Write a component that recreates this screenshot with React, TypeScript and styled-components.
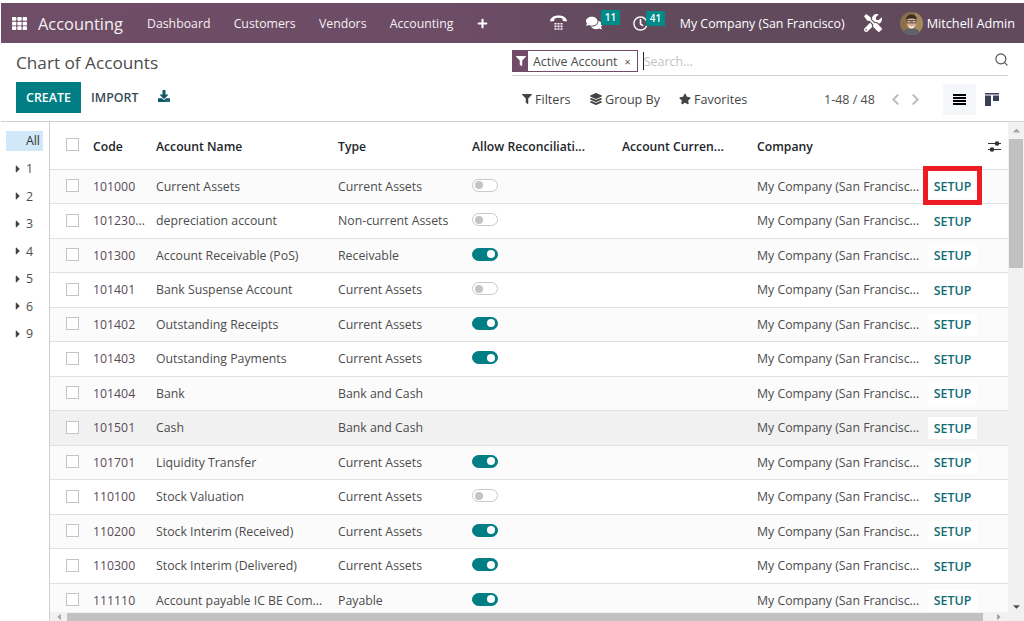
import styled, { createGlobalStyle } from "styled-components";
import { Search } from "lucide-react";
import {
  FaCaretDown,
  FaCaretLeft,
  FaCaretRight,
  FaCaretUp,
  FaChevronLeft,
  FaChevronRight,
  FaComments,
  FaDownload,
  FaFilter,
  FaLayerGroup,
  FaPlus,
  FaRegClock,
  FaStar,
  FaTh,
  FaTools,
} from "react-icons/fa";

const GlobalStyle = createGlobalStyle`
  html, body {
    margin: 0;
    height: 100%;
    background: #fff;
    overflow: hidden;
  }
  body {
    font-family: "Open Sans", "Noto Sans", "Liberation Sans", sans-serif;
    font-size: 12px;
    color: #4c4c4c;
  }
  * {
    box-sizing: border-box;
  }
`;

const Page = styled.div`
  display: flex;
  flex-direction: column;
  height: 621px;
  padding-top: 3px;
`;

const NavBar = styled.header`
  display: flex;
  align-items: center;
  flex: none;
  height: 40px;
  margin-left: 1px;
  padding: 0 9px 0 11px;
  background: linear-gradient(90deg, #6f4d66, #6d4c65 45%, #624a5d 60%);
  color: #fff;
`;

const AppsIcon = styled(FaTh)`
  width: 15px;
  height: 15px;
`;

const BrandName = styled.span`
  margin: 0 24px 0 11px;
  font-size: 16.4px;
  opacity: 0.92;
`;

const NavLink = styled.span`
  margin-right: 23.200px;
  font-size: 12.3px;
  opacity: 0.92;
`;

const NavPlus = styled(FaPlus)`
  width: 11px;
  height: 11px;
`;

const NavRight = styled.div`
  display: flex;
  align-items: center;
  margin-left: auto;
`;

const IconWithBadge = styled.span<{ $gap: number }>`
  position: relative;
  display: flex;
  align-items: center;
  margin-right: ${(p) => p.$gap}px;
`;

const Badge = styled.span<{ $left: number }>`
  position: absolute;
  top: -5px;
  left: ${(p) => p.$left}px;
  padding: 0 4px;
  height: 15px;
  line-height: 15px;
  font-size: 10px;
  font-weight: 600;
  background: #018a8a;
  color: #fff;
`;

const CompanyName = styled.span`
  margin-right: 19px;
  font-size: 12.4px;
`;

const UserName = styled.span`
  margin-left: 4px;
  font-size: 12.7px;
`;

const ControlPanel = styled.section`
  display: grid;
  grid-template-columns: 511px 1fr;
  grid-template-rows: 39px 39px;
  flex: none;
  height: 79px;
  margin-left: 1px;
  border-bottom: 1px solid #cfcfcf;
`;

const PageTitle = styled.h1`
  margin: 0;
  padding: 7px 0 0 15px;
  font-size: 17.2px;
  line-height: 26px;
  font-weight: 400;
  color: #4c4c4c;
`;

const SearchRow = styled.div`
  display: flex;
  align-items: center;
  height: 33px;
  margin: 0 16px 0 0;
  padding-top: 4px;
  border-bottom: 1px solid #cfcfcf;
`;

const Facet = styled.div`
  display: flex;
  align-items: center;
  height: 22px;
  border: 1px solid #714b67;
  font-size: 12.4px;
  color: #4c4c4c;
`;

const FacetIcon = styled.span`
  display: flex;
  align-items: center;
  justify-content: center;
  width: 15px;
  height: 100%;
  background: #714b67;
  color: #fff;
`;

const FacetLabel = styled.span`
  padding: 0 5px;
`;

const FacetClose = styled.span`
  padding: 0 6px 0 2px;
  font-size: 11px;
  color: #555;
`;

const SearchCaret = styled.span`
  width: 1px;
  height: 18px;
  margin-left: 5px;
  background: #222;
`;

const SearchHint = styled.span`
  flex: 1;
  font-size: 12.4px;
  color: #c3c3c3;
`;

const SearchIcon = styled(Search)`
  color: #4c4c4c;
  margin: -4px -1px 0 0;
`;

const LeftButtons = styled.div`
  display: flex;
  align-items: center;
  align-self: start;
  height: 31px;
  padding-left: 15px;
`;

const CreateButton = styled.button`
  height: 31px;
  width: 65px;
  padding: 0;
  border: none;
  background: #017e84;
  color: #fff;
  font: 600 12.4px "Open Sans", sans-serif;
`;

const ImportButton = styled.button`
  margin-left: 10px;
  padding: 0;
  border: none;
  background: none;
  color: #3a4a57;
  font: 600 12.4px "Open Sans", sans-serif;
`;

const DownloadIcon = styled(FaDownload)`
  width: 12px;
  height: 12px;
  margin: -3px 0 0 20px;
  color: #0d5a66;
`;

const RightTools = styled.div`
  display: flex;
  align-items: center;
  align-self: start;
  height: 34px;
  padding-left: 10px;
`;

const FilterItem = styled.span<{ $width: number }>`
  display: flex;
  align-items: center;
  gap: 3px;
  width: ${(p) => p.$width}px;
  font-size: 12.6px;
  font-weight: 500;
  color: #444;
`;

const Pager = styled.span`
  margin-left: 9px;
  font-size: 12.5px;
  color: #4c4c4c;
`;

const PagerArrows = styled.span`
  display: flex;
  gap: 7px;
  margin-left: 14px;
  color: #b9bec4;
`;

const ViewButton = styled.span`
  display: flex;
  align-items: center;
  justify-content: center;
  width: 33px;
  height: 31px;
  margin-left: 21px;
  background: #f4f6fa;
  color: #000;
`;

const KanbanIcon = styled.svg`
  margin-left: 9px;
`;

const Body = styled.div`
  display: flex;
  flex: 1;
  min-height: 0;
`;

const SidePanel = styled.aside`
  flex: none;
  width: 49px;
  margin-left: 1px;
  padding: 9px 6px 0 5px;
  border-right: 1px solid #cfcfcf;
  font-size: 12.4px;
  color: #4c4c4c;
`;

const SideAll = styled.div`
  height: 20px;
  padding-right: 3px;
  line-height: 20px;
  text-align: right;
  background: #d0e8f8;
  color: #333;
`;

const SideList = styled.div`
  padding-top: 4px;
`;

const SideItem = styled.div`
  display: flex;
  align-items: center;
  gap: 4px;
  height: 27.500px;
  padding-left: 8px;
`;

const Caret = styled(FaCaretRight)`
  width: 8px;
  height: 12px;
  color: #444;
`;

const ListArea = styled.div`
  display: grid;
  grid-template-columns: 1fr 16px;
  grid-template-rows: 1fr 9px;
  flex: 1;
  min-width: 0;
`;

const TableClip = styled.div`
  overflow: hidden;
  min-height: 0;
`;

const columns = "43px 63px 182px 134px 150px 135px 171px 49px 30px";

const HeaderRow = styled.div`
  display: grid;
  grid-template-columns: ${columns};
  align-items: center;
  height: 47.500px;
  padding-top: 3px;
  border-bottom: 1px solid #dee2e6;
  font-size: 12.2px;
  font-weight: 600;
  color: #212529;
`;

const DataRow = styled.div<{ $striped: boolean; $hover: boolean }>`
  display: grid;
  grid-template-columns: ${columns};
  align-items: center;
  height: 34.500px;
  border-bottom: 1px solid #dee2e6;
  font-size: 12.3px;
  background: ${(p) => (p.$hover ? "#f1f1f1" : p.$striped ? "#fbfbfb" : "#fff")};
`;

const Cell = styled.span`
  white-space: nowrap;
`;

const CodeCell = styled(Cell)`
  color: #5a4a58;
`;

const Checkbox = styled.span`
  display: block;
  width: 13px;
  height: 13px;
  margin: -1px 0 0 16px;
  border: 1px solid #c4c4c4;
  background: #fff;
`;

const HeaderCheckbox = styled(Checkbox)`
  margin-top: -4px;
`;

const Toggle = styled.span<{ $on: boolean }>`
  display: flex;
  align-items: center;
  justify-content: ${(p) => (p.$on ? "flex-end" : "flex-start")};
  width: 26px;
  height: 13px;
  margin-top: -2px;
  padding: 0 2px;
  border-radius: 7px;
  border: 1px solid ${(p) => (p.$on ? "#017e84" : "#c8c8c8")};
  background: ${(p) => (p.$on ? "#017e84" : "#fff")};
  &::after {
    content: "";
    width: 8px;
    height: 8px;
    border-radius: 50%;
    background: ${(p) => (p.$on ? "#fff" : "#c4c4c4")};
  }
`;

const SetupWrap = styled.span`
  position: relative;
  display: flex;
  margin-top: 1px;
`;

const SetupButton = styled.button<{ $plain: boolean }>`
  width: 49px;
  height: 22px;
  padding: 0;
  border: none;
  background: ${(p) => (p.$plain ? "transparent" : "#fff")};
  color: #0f6b73;
  font: 600 12.4px "Open Sans", sans-serif;
`;

const Highlight = styled.span`
  position: absolute;
  top: -10px;
  left: -5px;
  width: 59px;
  height: 39px;
  border: 5px solid #ed1c24;
`;

const ColumnTool = styled.svg`
  justify-self: end;
  margin-right: 6px;
`;

const VerticalBar = styled.div`
  display: flex;
  flex-direction: column;
  align-items: center;
  background: #f1f1f1;
  color: #a3a3a3;
  font-size: 11px;
`;

const BarEnd = styled.span<{ $grow?: boolean }>`
  display: flex;
  flex: ${(p) => (p.$grow ? 1 : "none")};
  align-items: ${(p) => (p.$grow ? "flex-end" : "center")};
  height: 17px;
  color: ${(p) => (p.$grow ? "#505050" : "#a3a3a3")};
`;

const VerticalThumb = styled.div`
  flex: none;
  width: 14px;
  height: 129px;
  background: #c1c1c1;
`;

const HorizontalBar = styled.div`
  display: flex;
  align-items: center;
  padding: 0 4px;
  background: #f1f1f1;
  font-size: 10px;
  color: #a3a3a3;
`;

const HorizontalThumb = styled.div`
  align-self: flex-end;
  width: 916px;
  height: 8px;
  margin: 0 auto 0 3px;
  background: #c1c1c1;
`;

const BarCorner = styled.div`
  background: #f1f1f1;
`;

type Account = {
  code: string;
  name: string;
  type: string;
  reconcile?: boolean;
};

const accounts: Account[] = [
  { code: "101000", name: "Current Assets", type: "Current Assets", reconcile: false },
  { code: "101230...", name: "depreciation account", type: "Non-current Assets", reconcile: false },
  { code: "101300", name: "Account Receivable (PoS)", type: "Receivable", reconcile: true },
  { code: "101401", name: "Bank Suspense Account", type: "Current Assets", reconcile: false },
  { code: "101402", name: "Outstanding Receipts", type: "Current Assets", reconcile: true },
  { code: "101403", name: "Outstanding Payments", type: "Current Assets", reconcile: true },
  { code: "101404", name: "Bank", type: "Bank and Cash" },
  { code: "101501", name: "Cash", type: "Bank and Cash" },
  { code: "101701", name: "Liquidity Transfer", type: "Current Assets", reconcile: true },
  { code: "110100", name: "Stock Valuation", type: "Current Assets", reconcile: false },
  { code: "110200", name: "Stock Interim (Received)", type: "Current Assets", reconcile: true },
  { code: "110300", name: "Stock Interim (Delivered)", type: "Current Assets", reconcile: true },
  { code: "111110", name: "Account payable IC BE Com...", type: "Payable", reconcile: true },
];

const groups = ["1", "2", "3", "4", "5", "6", "9"];

function PhoneIcon() {
  return (
    <svg width="17" height="16" viewBox="0 0 17 16" fill="#fff">
      <path d="M0 5.2C1.5 1.8 4.8.5 8.500.5s7 1.300 8.500 4.700l-.5 1.300-3.600-.6-.5-2.300c-1.200-.6-2.600-.8-3.900-.8s-2.700.2-3.900.8l-.5 2.300-3.600.6z" />
      <path d="M4.500 8h2v1.600h-2zM7.500 8h2v1.600h-2zM10.500 8h2v1.600h-2zM4.500 10.600h2v1.600h-2zM7.500 10.600h2v1.600h-2zM10.500 10.600h2v1.600h-2zM4.500 13.200h2v1.600h-2zM7.500 13.200h2v1.600h-2zM10.500 13.200h2v1.600h-2z" />
    </svg>
  );
}

function Avatar() {
  return (
    <svg width="23" height="23" viewBox="0 0 23 23">
      <defs>
        <clipPath id="avatar-clip">
          <circle cx="11.5" cy="11.5" r="11.500" />
        </clipPath>
      </defs>
      <g clipPath="url(#avatar-clip)">
        <rect width="23" height="23" fill="#8a7048" />
        <rect x="15" width="8" height="23" fill="#a38a5c" />
        <path d="M3 23c0-5 4-7 8.500-7s8.500 2 8.500 7z" fill="#5d6468" />
        <ellipse cx="11.500" cy="10.500" rx="5" ry="6.500" fill="#d9ab8e" />
        <path d="M6 8c0-4 3-5.500 5.500-5.500S17 4 17 8c-2-2-9-2-11 0z" fill="#3b2d25" />
        <rect x="7" y="8.500" width="4" height="2.500" fill="none" stroke="#3a3a3a" strokeWidth=".7" />
        <rect x="12" y="8.500" width="4" height="2.500" fill="none" stroke="#3a3a3a" strokeWidth=".7" />
        <path d="M8.500 13.500c1.500 1.500 4.500 1.500 6 0l-1 2.200h-4z" fill="#fff" />
      </g>
    </svg>
  );
}

function App() {
  return (
    <Page>
      <GlobalStyle />
      <NavBar>
        <AppsIcon />
        <BrandName>Accounting</BrandName>
        <NavLink>Dashboard</NavLink>
        <NavLink>Customers</NavLink>
        <NavLink>Vendors</NavLink>
        <NavLink>Accounting</NavLink>
        <NavPlus />
        <NavRight>
          <IconWithBadge $gap={19}>
            <PhoneIcon />
          </IconWithBadge>
          <IconWithBadge $gap={31}>
            <FaComments size={16} />
            <Badge $left={15}>11</Badge>
          </IconWithBadge>
          <IconWithBadge $gap={32}>
            <FaRegClock size={15} />
            <Badge $left={13}>41</Badge>
          </IconWithBadge>
          <CompanyName>My Company (San Francisco)</CompanyName>
          <IconWithBadge $gap={18}>
            <FaTools size={18} />
          </IconWithBadge>
          <Avatar />
          <UserName>Mitchell Admin</UserName>
        </NavRight>
      </NavBar>
      <ControlPanel>
        <PageTitle>Chart of Accounts</PageTitle>
        <SearchRow>
          <Facet>
            <FacetIcon>
              <FaFilter size={10} />
            </FacetIcon>
            <FacetLabel>Active Account</FacetLabel>
            <FacetClose>×</FacetClose>
          </Facet>
          <SearchCaret />
          <SearchHint>Search...</SearchHint>
          <SearchIcon size={15} strokeWidth={1.8} />
        </SearchRow>
        <LeftButtons>
          <CreateButton>CREATE</CreateButton>
          <ImportButton>IMPORT</ImportButton>
          <DownloadIcon />
        </LeftButtons>
        <RightTools>
          <FilterItem $width={68}>
            <FaFilter size={10} />
            Filters
          </FilterItem>
          <FilterItem $width={89}>
            <FaLayerGroup size={12} />
            Group By
          </FilterItem>
          <FilterItem $width={136}>
            <FaStar size={12} />
            Favorites
          </FilterItem>
          <Pager>1-48 / 48</Pager>
          <PagerArrows>
            <FaChevronLeft size={13} />
            <FaChevronRight size={13} />
          </PagerArrows>
          <ViewButton>
            <svg width="13" height="11" viewBox="0 0 13 11" fill="#000">
              <path d="M0 0h13v2H0zM0 3h13v2H0zM0 6h13v2H0zM0 9h13v2H0z" />
            </svg>
          </ViewButton>
          <KanbanIcon width="14" height="13" viewBox="0 0 14 13" fill="#3a3f55">
            <path d="M0 0h14v1.500H0zM0 2.500h6V13H0zM8 2.500h6V8H8z" />
          </KanbanIcon>
        </RightTools>
      </ControlPanel>
      <Body>
        <SidePanel>
          <SideAll>All</SideAll>
          <SideList>
            {groups.map((group) => (
              <SideItem key={group}>
                <Caret />
                {group}
              </SideItem>
            ))}
          </SideList>
        </SidePanel>
        <ListArea>
          <TableClip>
            <HeaderRow>
              <HeaderCheckbox />
              <Cell>Code</Cell>
              <Cell>Account Name</Cell>
              <Cell>Type</Cell>
              <Cell>Allow Reconciliati...</Cell>
              <Cell>Account Curren...</Cell>
              <Cell>Company</Cell>
              <span />
              <ColumnTool width="13" height="11" viewBox="0 0 13 11" fill="#333">
                <path d="M0 2h13v1H0zM0 8h13v1H0z" />
                <circle cx="9" cy="2.500" r="2.300" />
                <circle cx="4" cy="8.500" r="2.300" />
              </ColumnTool>
            </HeaderRow>
            {accounts.map((account, index) => (
              <DataRow key={account.code} $striped={index % 2 === 0} $hover={account.code === "101501"}>
                <Checkbox />
                <CodeCell>{account.code}</CodeCell>
                <Cell>{account.name}</Cell>
                <Cell>{account.type}</Cell>
                <span>{account.reconcile !== undefined && <Toggle $on={account.reconcile} />}</span>
                <span />
                <Cell>My Company (San Francisc...</Cell>
                <SetupWrap>
                  <SetupButton $plain={index % 2 === 1 && account.code !== "101501"}>SETUP</SetupButton>
                  {index === 0 && <Highlight />}
                </SetupWrap>
                <span />
              </DataRow>
            ))}
          </TableClip>
          <VerticalBar>
            <BarEnd>
              <FaCaretUp />
            </BarEnd>
            <VerticalThumb />
            <BarEnd $grow>
              <FaCaretDown />
            </BarEnd>
          </VerticalBar>
          <HorizontalBar>
            <FaCaretLeft />
            <HorizontalThumb />
            <FaCaretRight />
          </HorizontalBar>
          <BarCorner />
        </ListArea>
      </Body>
    </Page>
  );
}

export default App;
